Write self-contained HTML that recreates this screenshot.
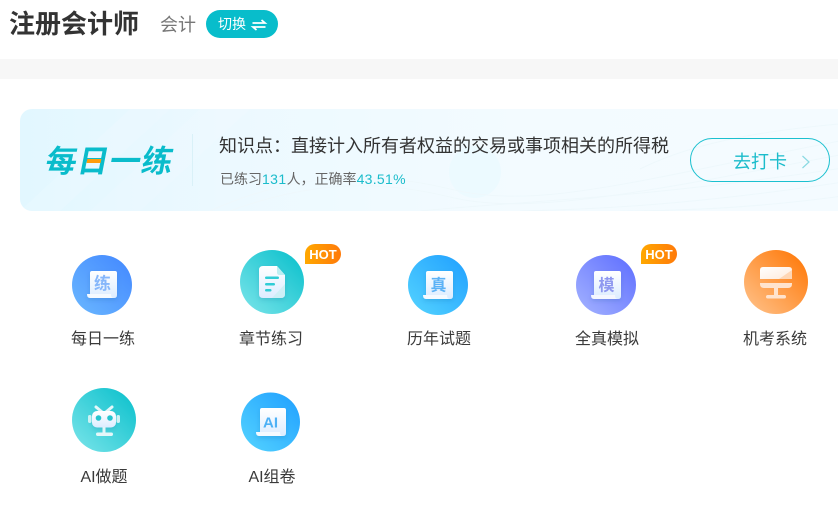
<!DOCTYPE html>
<html lang="zh"><head><meta charset="utf-8">
<style>
html,body{margin:0;padding:0;background:#fff}
body{width:838px;height:517px;overflow:hidden;position:relative;font-family:"Liberation Sans","Noto Sans CJK SC",sans-serif}
.a{position:absolute;white-space:nowrap}
.lb{position:absolute;font-size:16px;line-height:22px;color:#3a3a3a;text-align:center;width:120px;white-space:nowrap}
.hot{position:absolute;width:36px;height:20px;top:244px;background:linear-gradient(90deg,#ffa800,#ff7a0a);border-radius:10px 10px 10px 0;color:#fff;font:bold 13px/21px "Liberation Sans",sans-serif;text-align:center}
svg.ic{position:absolute;overflow:visible}
svg text{font-family:"Liberation Sans","Noto Sans CJK SC",sans-serif}
</style></head><body>
<div class="a" style="left:9px;top:5px;font-size:26px;line-height:38px;font-weight:700;color:#333">注册会计师</div>
<div class="a" style="left:160px;top:12px;font-size:18px;line-height:26px;color:#777">会计</div>
<div class="a" style="left:206px;top:10px;width:72px;height:28px;border-radius:14px;background:#08bdcb"></div>
<div class="a" style="left:218px;top:14px;font-size:14px;line-height:20px;color:#fff">切换</div>
<svg class="ic" style="left:252px;top:19px" width="14" height="12" viewBox="0 0 14 12"><path d="M0.500 4H13L9.500 1M13.500 8H1L4.500 11" fill="none" stroke="#fff" stroke-width="1.800"/></svg>
<div class="a" style="left:0;top:59px;width:838px;height:20px;background:#f7f7f7"></div>

<div class="a" style="left:20px;top:109px;width:830px;height:102px;border-radius:12px;background:linear-gradient(90deg,#e2f7ff 0,#ecf9ff 25%,#f3fbff 60%,#f4fbff 100%);overflow:hidden">
<svg width="830" height="102" style="position:absolute;left:0;top:0" fill="none">
<path d="M0 102L110 0H150L40 102Z" fill="#fff" opacity=".12"/>
<path d="M70 102L180 0H230L120 102Z" fill="#fff" opacity=".1"/>
<circle cx="455" cy="63" r="26" fill="#ecfaff"/>
<g stroke="#eef8fc" stroke-width="1">
<path d="M190 102C260 70 340 58 430 80S620 70 830 30"/>
<path d="M210 102C280 76 350 68 430 88S640 80 830 44"/>
<path d="M400 102C500 92 620 90 830 58"/>
<path d="M500 102C600 100 700 92 830 72"/>
<path d="M600 102C680 102 760 96 830 86"/>
<path d="M620 60C680 30 760 20 830 14"/>
</g></svg>
</div>
<div class="a" style="left:46px;top:143px;font-size:31px;line-height:38px;font-weight:700;color:#0abccb;letter-spacing:1px;transform:skewX(-11deg)">每日一练</div>
<div class="a" style="left:87px;top:159px;width:14px;height:3.500px;background:#ff9d0a;transform:skewX(-11deg)"></div>
<div class="a" style="left:192px;top:134px;width:1px;height:52px;background:#d9f1f8"></div>
<div class="a" style="left:219px;top:133px;font-size:18px;line-height:26px;color:#333">知识点&#xFF1A;直接计入所有者权益的交易或事项相关的所得税</div>
<div class="a" style="left:220px;top:168px;font-size:14px;line-height:22px;color:#666">已练习<span style="color:#1bbccb;letter-spacing:.4px">131</span>人&#xFF0C;正确率<span style="color:#1bbccb;letter-spacing:.3px">43.51%</span></div>
<div class="a" style="left:690px;top:138px;width:138px;height:42px;border:1px solid #1bc0cf;border-radius:22px"></div>
<div class="a" style="left:733px;top:149px;font-size:18px;line-height:26px;color:#1bbccb">去打卡</div>
<svg class="ic" style="left:801px;top:155px" width="10" height="14" viewBox="0 0 10 14"><path d="M1.500 1L8 7L1.500 13" fill="none" stroke="#8ad9e2" stroke-width="1.200"/></svg>

<svg class="ic" style="left:0;top:0" width="838" height="517" viewBox="0 0 838 517">
<defs>
<linearGradient id="b1" x1="0" y1="1" x2="1" y2="0"><stop offset="0" stop-color="#6bb8ff"/><stop offset="1" stop-color="#4287ff"/></linearGradient>
<linearGradient id="g1" x1="0" y1="1" x2="1" y2="0"><stop offset="0" stop-color="#7ce5ea"/><stop offset="1" stop-color="#07bfcb"/></linearGradient>
<linearGradient id="c1" x1="0" y1="1" x2="1" y2="0"><stop offset="0" stop-color="#55d4ff"/><stop offset="1" stop-color="#1f9fff"/></linearGradient>
<linearGradient id="p1" x1="0" y1="1" x2="1" y2="0"><stop offset="0" stop-color="#a5b4ff"/><stop offset="1" stop-color="#5c6cff"/></linearGradient>
<linearGradient id="o1" x1="0" y1="1" x2="1" y2="0"><stop offset="0" stop-color="#ffc48e"/><stop offset="1" stop-color="#ff7400"/></linearGradient>
<linearGradient id="w" x1="0" y1="0" x2="0" y2="1"><stop offset="0" stop-color="#fff"/><stop offset="1" stop-color="#dcecff"/></linearGradient>
<linearGradient id="m" x1="0" y1="0" x2="1" y2="1"><stop offset="0" stop-color="#fff"/><stop offset="1" stop-color="#ffeadb"/></linearGradient>
<filter id="s" x="-30%" y="-30%" width="160%" height="160%"><feDropShadow dx="0" dy="2" stdDeviation="2" flood-color="#0a4a80" flood-opacity=".16"/></filter>
</defs>
<!-- 每日一练 -->
<circle cx="102" cy="285" r="30" fill="url(#b1)"/>
<g filter="url(#s)">
<path d="M90 273Q90 271 92 271H115Q117 271 117 273V295Q117 298 114 298H90Z" fill="url(#w)"/>
<path d="M87 294H111Q111 298 114 298H90Q87 298 87 294Z" fill="#f5faff"/>
</g>
<text x="102.500" y="289.500" font-size="17" font-weight="700" text-anchor="middle" fill="#86b7fb">练</text>
<!-- 章节练习 -->
<circle cx="272" cy="282" r="32" fill="url(#g1)"/>
<g filter="url(#s)">
<path d="M263 266H277L285 275V294Q285 298 281 298H263Q259 298 259 294V270Q259 266 263 266Z" fill="url(#w)"/>
</g>
<path d="M277 266L285 275H279.500Q277 275 277 272.500Z" fill="#bdeff2"/>
<path d="M285 284V294Q285 298 281 298H272Z" fill="#c6f0f2" opacity=".7"/>
<rect x="265" y="276.500" width="14" height="2.500" rx="1.250" fill="#30cdd6"/>
<rect x="265" y="283" width="10" height="2.500" rx="1.250" fill="#30cdd6"/>
<rect x="265" y="289" width="6.500" height="2.500" rx="1.250" fill="#30cdd6"/>
<!-- 历年试题 -->
<circle cx="438" cy="285" r="30" fill="url(#c1)"/>
<g filter="url(#s)">
<path d="M426 273Q426 271 428 271H451Q453 271 453 273V296Q453 299 450 299H426Z" fill="url(#w)"/>
<path d="M423 295H447Q447 299 450 299H426Q423 299 423 295Z" fill="#f5faff"/>
</g>
<text x="438.500" y="290.500" font-size="16" font-weight="700" text-anchor="middle" fill="#5cb2f6">真</text>
<!-- 全真模拟 -->
<circle cx="606" cy="285" r="30" fill="url(#p1)"/>
<g filter="url(#s)">
<path d="M594 273Q594 271 596 271H619Q621 271 621 273V296Q621 299 618 299H594Z" fill="url(#w)"/>
<path d="M591 295H615Q615 299 618 299H594Q591 299 591 295Z" fill="#f5f7ff"/>
</g>
<text x="606.500" y="290.500" font-size="16" font-weight="700" text-anchor="middle" fill="#8f98f0">模</text>
<!-- 机考系统 -->
<circle cx="776" cy="282" r="32" fill="url(#o1)"/>
<path d="M760 270Q760 267 763 267H789Q792 267 792 270V279H760Z" fill="url(#m)"/>
<path d="M779 279L792 270V279Z" fill="#ffd6b5"/>
<path d="M760 283H792V284Q792 288 788 288H764Q760 288 760 284Z" fill="#ffe3cd"/>
<rect x="774" y="288" width="4" height="7" fill="#ffe3cd"/>
<rect x="766" y="295" width="20" height="3.500" rx="1.750" fill="#ffe3cd"/>
<!-- AI做题 -->
<circle cx="104" cy="420" r="32" fill="url(#g1)"/>
<path d="M96 407L102 412M112 407L106 412" stroke="#e4f8fa" stroke-width="3" stroke-linecap="round"/>
<rect x="92" y="411" width="24" height="16.500" rx="5" fill="url(#w)" filter="url(#s)"/>
<rect x="88" y="415" width="3.500" height="8" rx="1.700" fill="#cdf2f4"/>
<rect x="116.500" y="415" width="3.500" height="8" rx="1.700" fill="#cdf2f4"/>
<circle cx="98.500" cy="418" r="2.800" fill="#25c4ce"/><circle cx="110" cy="418" r="2.800" fill="#25c4ce"/>
<rect x="102.500" y="427" width="3" height="6" fill="#dff6f8"/>
<rect x="96" y="432.500" width="17" height="3.500" rx="1.700" fill="#e4f7f9"/>
<!-- AI组卷 -->
<circle cx="270.500" cy="422" r="29.500" fill="url(#c1)"/>
<g filter="url(#s)">
<path d="M260 410Q260 408 262 408H284Q286 408 286 410V433Q286 436 283 436H260Z" fill="url(#w)"/>
<path d="M256 432H280Q280 436 283 436H259Q256 436 256 432Z" fill="#f5faff"/>
</g>
<text x="270.500" y="427.500" font-size="15" font-weight="700" text-anchor="middle" fill="#4eb1f5">AI</text>
</svg>
<div class="hot" style="left:305px">HOT</div>
<div class="hot" style="left:641px">HOT</div>

<div class="lb" style="left:43px;top:329px">每日一练</div>
<div class="lb" style="left:211px;top:329px">章节练习</div>
<div class="lb" style="left:379px;top:329px">历年试题</div>
<div class="lb" style="left:547px;top:329px">全真模拟</div>
<div class="lb" style="left:715px;top:329px">机考系统</div>
<div class="lb" style="left:44px;top:467px">AI做题</div>
<div class="lb" style="left:212px;top:467px">AI组卷</div>
</body></html>
